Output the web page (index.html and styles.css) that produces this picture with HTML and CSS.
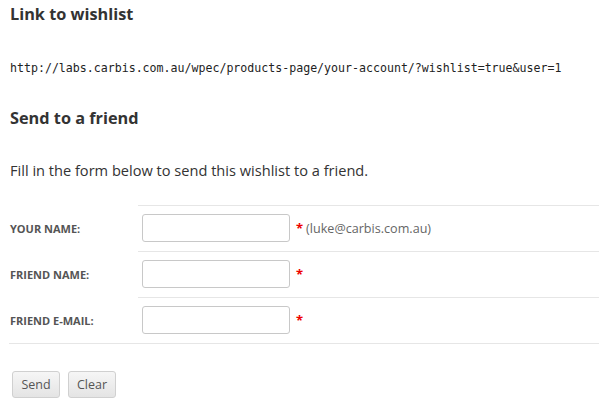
FILE: index.html
```html
<!DOCTYPE html>
<html>
<head>
<meta charset="utf-8">
<link rel="stylesheet" href="styles.css">
</head>
<body>
<div class="page">
  <h2 class="heading">Link to wishlist</h2>
  <p class="url">http://labs.carbis.com.au/wpec/products-page/your-account/?wishlist=true&amp;user=1</p>
  <h2 class="heading heading-send">Send to a friend</h2>
  <p class="intro">Fill in the form below to send this wishlist to a friend.</p>
  <form class="form">
    <div class="rows">
      <div class="row">
        <label class="label">YOUR NAME:</label>
        <div class="field"><span class="input"></span><span class="req">*</span><span class="hint">(luke@carbis.com.au)</span></div>
      </div>
      <div class="row">
        <label class="label">FRIEND NAME:</label>
        <div class="field"><span class="input"></span><span class="req">*</span></div>
      </div>
      <div class="row">
        <label class="label">FRIEND E-MAIL:</label>
        <div class="field"><span class="input"></span><span class="req">*</span></div>
      </div>
    </div>
    <div class="actions">
      <button type="button" class="btn">Send</button>
      <button type="button" class="btn">Clear</button>
    </div>
  </form>
</div>
</body>
</html>
```
FILE: styles.css
```css
html, body {
  margin: 0;
  padding: 0;
  background: #fff;
}
body {
  font-family: "Open Sans", "DejaVu Sans", sans-serif;
  color: #333;
}
.page {
  padding: 0 17px 0 9px;
}
.heading {
  margin: 0;
  padding-left: 1px;
  font-size: 16.3px;
  font-weight: 700;
  line-height: 28px;
  color: #333;
}
.url {
  margin: 26px 0 0 1px;
  font-family: "DejaVu Sans Mono", "Liberation Mono", monospace;
  font-size: 11.6px;
  line-height: 28px;
  color: #222;
}
.heading-send {
  margin-top: 22px;
}
.intro {
  margin: 28px 0 0 1px;
  font-size: 14.6px;
  line-height: 20px;
  color: #333;
}
.form {
  margin-top: 25px;
}
.rows {
  border-bottom: 1px solid #e6e6e6;
}
.row {
  display: flex;
  align-items: stretch;
}
.label {
  width: 129px;
  flex: none;
  display: flex;
  align-items: center;
  padding-left: 1px;
  box-sizing: border-box;
  font-size: 11px;
  font-weight: 700;
  color: #555;
}
.field {
  flex: 1;
  display: flex;
  align-items: center;
  border-top: 1px solid #e6e6e6;
  padding: 8px 0 9px 4px;
}
.input {
  display: block;
  width: 146px;
  height: 26px;
  border: 1px solid #c8c8c8;
  border-radius: 3px;
  background: #fff;
}
.req {
  margin-left: 6px;
  color: #e00;
  font-size: 13px;
  font-weight: 700;
}
.hint {
  margin-left: 3px;
  font-size: 12.6px;
  color: #666;
}
.actions {
  display: flex;
  gap: 8px;
  padding: 27px 0 0 3px;
}
.btn {
  width: 48px;
  height: 27px;
  padding: 0;
  border: 1px solid #d0d0d0;
  border-radius: 3px;
  background: linear-gradient(#f6f6f6, #e4e4e4);
  font-family: "Open Sans", sans-serif;
  font-size: 12.5px;
  color: #555;
}
```
